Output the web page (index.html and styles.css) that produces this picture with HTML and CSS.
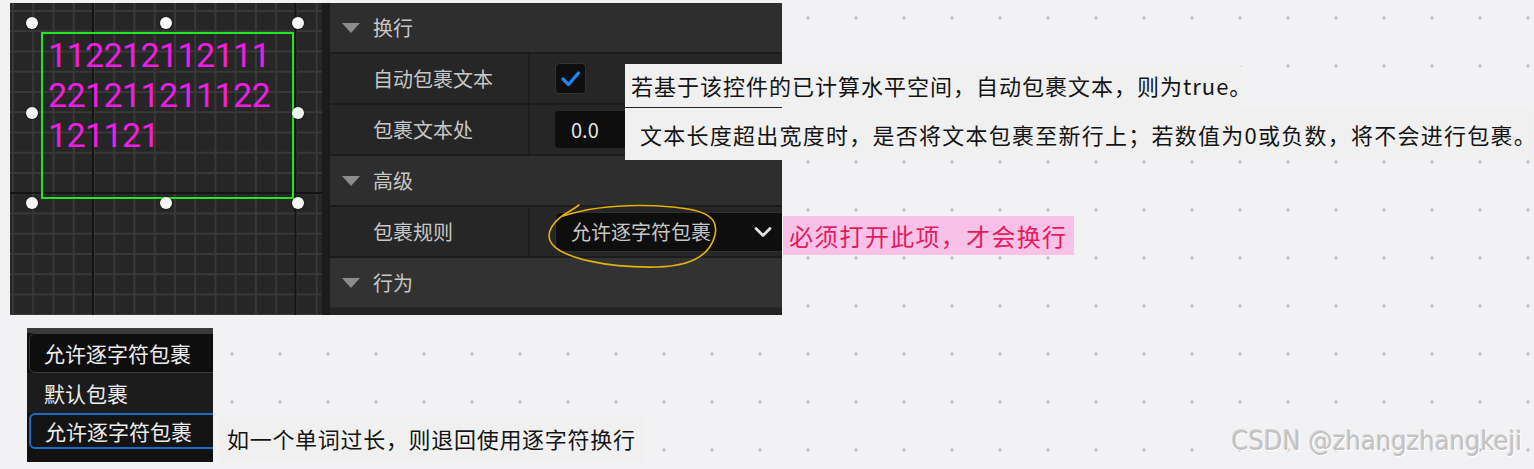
FILE: index.html
```html
<!DOCTYPE html>
<html lang="zh-CN">

<head>
    <meta charset="UTF-8">
    <meta name="viewport" content="width=device-width, initial-scale=1.0">
    <title>自动换行设置</title>
    <link rel="stylesheet" href="styles.css">
</head>

<body>
    <div class="shot">
        <div class="editor">
            <!-- Designer viewport -->
            <div class="viewport">
                <div class="widget">
                    <p class="widget-text">112212112111<br>221211211122<br>121121</p>
                </div>
                <span class="handle h1"></span>
                <span class="handle h2"></span>
                <span class="handle h3"></span>
                <span class="handle h4"></span>
                <span class="handle h5"></span>
                <span class="handle h6"></span>
                <span class="handle h7"></span>
                <span class="handle h8"></span>
            </div>
            <div class="splitter"></div>

            <!-- Details panel -->
            <div class="details">
                <div class="category"><span class="arrow"></span>换行</div>
                <div class="prop">
                    <div class="prop-name">自动包裹文本</div>
                    <div class="prop-value">
                        <span class="checkbox">
                            <svg width="31" height="31" viewBox="0 0 31 31">
                                <path d="M8 16 L13.5 21.5 L23.5 10" fill="none" stroke="#1a86f0" stroke-width="3.4" stroke-linecap="round" stroke-linejoin="round" />
                            </svg>
                        </span>
                    </div>
                </div>
                <div class="prop">
                    <div class="prop-name">包裹文本处</div>
                    <div class="prop-value"><span class="number">0.0</span></div>
                </div>
                <div class="category"><span class="arrow"></span>高级</div>
                <div class="prop">
                    <div class="prop-name">包裹规则</div>
                    <div class="prop-value">
                        <span class="combo">
                            <span>允许逐字符包裹</span>
                            <svg width="20" height="12" viewBox="0 0 20 12">
                                <path d="M3 2.5 L10 9.5 L17 2.5" fill="none" stroke="#e2e2e2" stroke-width="2.8" stroke-linecap="round" stroke-linejoin="round" />
                            </svg>
                        </span>
                    </div>
                </div>
                <div class="category category-last"><span class="arrow"></span>行为</div>

                <div class="tip tip-auto">若基于该控件的已计算水平空间，自动包裹文本，则为true。</div>
                <div class="tip tip-at">文本长度超出宽度时，是否将文本包裹至新行上；若数值为0或负数，将不会进行包裹。</div>
                <svg class="scribble" width="178" height="70" viewBox="0 0 178 70">
                    <path d="M34 3 C30 6 28 7 25 9 C8 18 -1 32 7 42 C18 56 62 66 112 65 C150 64 166 50 170 33 C174 15 160 8 128 5 C92 2 52 3 18 14" fill="none" stroke="#e3b20a" stroke-width="1.6" stroke-linecap="round" />
                </svg>
                <div class="note">必须打开此项，才会换行</div>
            </div>
        </div>

        <div class="lower">
            <!-- Dropdown menu -->
            <div class="menu">
                <div class="menu-combo">允许逐字符包裹</div>
                <div class="menu-item">默认包裹</div>
                <div class="menu-item menu-item-hover">允许逐字符包裹</div>
            </div>
            <div class="tip tip-menu">如一个单词过长，则退回使用逐字符换行</div>
            <div class="watermark">CSDN @zhangzhangkeji</div>
        </div>
    </div>
</body>

</html>
```

FILE: styles.css
```css
html,
body {
    height: 100%;
}

body {
    margin: 0;
    background-color: #f2f2f4;
    background-image: radial-gradient(circle, #c4c4c7 1.4px, transparent 1.9px);
    background-size: 48px 48px;
    background-position: 16px -6px;
    font-family: "Noto Sans CJK SC", "Noto Sans", sans-serif;
}

.shot {
    padding: 3px 0 0 10px;
}

.editor {
    display: flex;
    height: 312px;
}

/* viewport with grid */
.viewport {
    position: relative;
    width: 312px;
    background-color: #262626;
    background-image:
        linear-gradient(90deg, #141414 2px, transparent 2px),
        linear-gradient(#141414 2px, transparent 2px),
        linear-gradient(90deg, #383838 1.5px, transparent 1.5px),
        linear-gradient(#383838 1.5px, transparent 1.5px);
    background-size: 202.5px 100%, 100% 202.5px, 20.25px 100%, 100% 20.25px;
    background-position: 82px 0, 0 189px, 2px 0, 0 7px;
}

.widget {
    position: absolute;
    left: 31px;
    top: 29px;
    width: 253px;
    height: 167px;
    box-sizing: border-box;
    border: 2px solid #22e622;
}

.widget-text {
    margin: 0;
    padding: 1px 0 0 5px;
    font-family: Roboto, sans-serif;
    font-size: 34px;
    line-height: 40px;
    letter-spacing: -0.6px;
    color: #f01ee4;
}

.handle {
    position: absolute;
    width: 12px;
    height: 12px;
    border-radius: 50%;
    background: #f6f6f6;
    box-shadow: 0 0 2px rgba(0, 0, 0, 0.7);
}

.h1 { left: 16px; top: 14px; }
.h2 { left: 150px; top: 14px; }
.h3 { left: 282px; top: 14px; }
.h4 { left: 16px; top: 104px; }
.h5 { left: 282px; top: 104px; }
.h6 { left: 16px; top: 194px; }
.h7 { left: 150px; top: 194px; }
.h8 { left: 282px; top: 194px; }

.splitter {
    width: 8px;
    background: #1b1b1b;
}

/* details panel */
.details {
    position: relative;
    width: 452px;
    background: #222;
    color: #c6c6c6;
    font-size: 20px;
}

.category {
    display: flex;
    align-items: center;
    height: 49px;
    padding-left: 12px;
    background: #2e2e2e;
    border-bottom: 2px solid #1c1c1c;
}

.category-last {
    background: #323232;
    border-bottom-color: #262626;
}

.arrow {
    width: 0;
    height: 0;
    margin-right: 13px;
    border-left: 9px solid transparent;
    border-right: 9px solid transparent;
    border-top: 10px solid #8c8c8c;
}

.prop {
    display: grid;
    grid-template-columns: 200px 1fr;
    height: 49px;
    background: #262626;
    border-bottom: 2px solid #1c1c1c;
}

.prop-name {
    display: flex;
    align-items: center;
    padding-left: 43px;
    border-right: 2px solid #1e1e1e;
}

.prop-value {
    display: flex;
    align-items: center;
    padding-left: 25px;
    overflow: hidden;
}

.checkbox {
    display: block;
    width: 31px;
    height: 31px;
    box-sizing: border-box;
    border: 1px solid #333;
    border-radius: 4px;
    background: #0e0e0e;
}

.checkbox svg {
    display: block;
    margin: -1px;
}

.number {
    display: flex;
    align-items: center;
    width: 160px;
    height: 37px;
    padding-left: 16px;
    border-radius: 4px;
    background: #0e0e0e;
    color: #e4e4e4;
}

.combo {
    display: flex;
    align-items: center;
    justify-content: space-between;
    flex-shrink: 0;
    width: 240px;
    height: 40px;
    box-sizing: border-box;
    padding: 0 21px 0 15px;
    border: 1px solid #303030;
    border-radius: 5px;
    background: #0e0e0e;
}

/* overlays */
.tip {
    background: #f0f0f0;
    color: #141414;
    font-size: 22px;
    white-space: nowrap;
}

.details .tip {
    position: absolute;
    left: 295px;
}

.tip-auto {
    top: 61px;
    width: 610px;
    height: 43px;
    padding-left: 6px;
    line-height: 43px;
    letter-spacing: 1px;
}

.tip-at {
    top: 105px;
    width: 891px;
    height: 52px;
    padding-left: 15px;
    line-height: 52px;
    letter-spacing: 1.25px;
}

.scribble {
    position: absolute;
    left: 215px;
    top: 199px;
}

.note {
    position: absolute;
    left: 453px;
    top: 213px;
    width: 285px;
    height: 39px;
    padding-left: 6px;
    background: #f8c2e8;
    color: #e41b5c;
    font-size: 24px;
    line-height: 39px;
    letter-spacing: 1.3px;
    white-space: nowrap;
}

/* lower part */
.lower {
    display: flex;
    align-items: flex-end;
    margin-top: 13px;
}

.menu {
    width: 186px;
    height: 134px;
    margin-left: 17px;
    box-sizing: border-box;
    border-top: 5px solid #3a3a3a;
    padding-left: 2px;
    background: #111;
    color: #ececec;
    font-size: 21px;
    overflow: hidden;
}

.menu-combo {
    width: 200px;
    height: 40px;
    box-sizing: border-box;
    padding-left: 14px;
    border: 1px solid #3a3a3a;
    border-radius: 6px;
    background: #0e0e0e;
    line-height: 38px;
}

.menu-item {
    height: 40px;
    margin-left: -2px;
    padding-left: 17px;
    background: #1c1c1c;
    line-height: 40px;
}

.menu-item-hover {
    width: 200px;
    height: 36px;
    margin-left: 0;
    box-sizing: border-box;
    padding-left: 14px;
    border: 2px solid #1c6cc8;
    border-radius: 6px;
    background: #141414;
    line-height: 32px;
}

.tip-menu {
    width: 417px;
    height: 47px;
    margin-left: 5px;
    padding-left: 9px;
    line-height: 47px;
    letter-spacing: 0.7px;
}

.watermark {
    margin-left: auto;
    margin-right: 12px;
    margin-bottom: 8px;
    font-family: "Liberation Sans Narrow", "DejaVu Sans Condensed", sans-serif;
    font-size: 27px;
    line-height: 27px;
    color: #c2c2c2;
    text-shadow: 1px 1px 0 #fff, -1px -1px 0 #d8d8d8;
}
```
